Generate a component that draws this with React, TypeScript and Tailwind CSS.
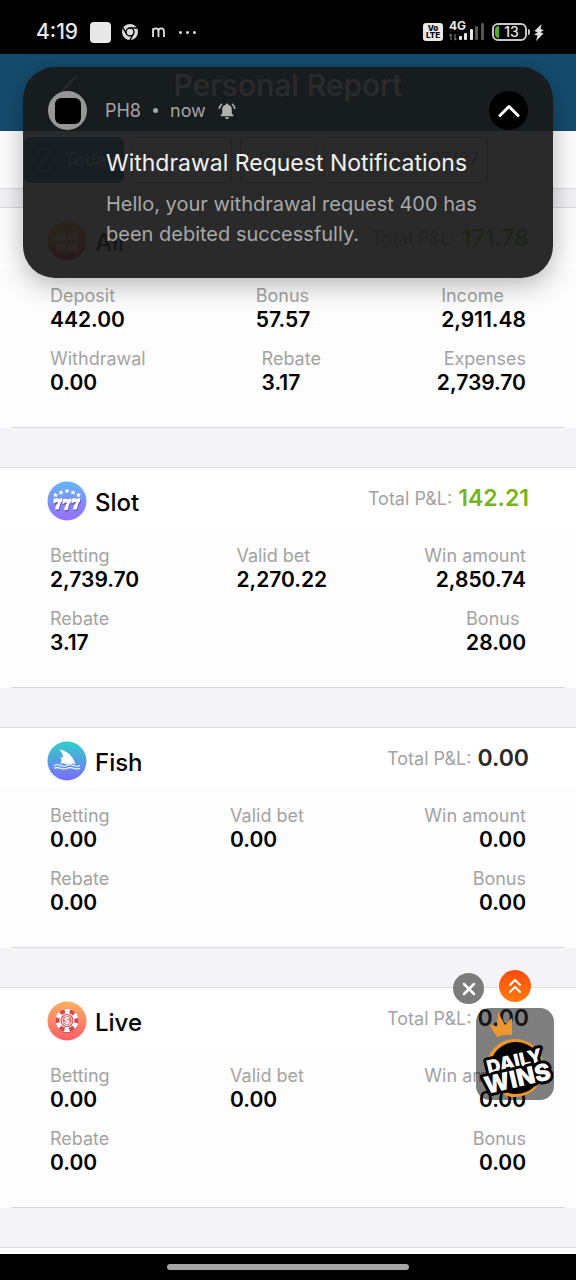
import type React from "react";
import { X, ChevronUp, ChevronsUp } from "lucide-react";

interface Stat {
  label: string;
  value: string;
  // alignment of the label and the value inside the cell
  end?: boolean;
}

interface ReportSection {
  name: string;
  total: string;
  positive?: boolean;
  icon: React.ReactNode;
  rows: Stat[][];
}

const AllIcon = () => (
  <svg viewBox="0 0 40 40" className="size-10" aria-hidden="true">
    <defs>
      <linearGradient id="all" x1="0" y1="0" x2="0" y2="1">
        <stop offset="0" stopColor="#f5b52e" />
        <stop offset="1" stopColor="#f0355c" />
      </linearGradient>
    </defs>
    <circle cx="20" cy="20" r="19.5" fill="url(#all)" />
    <g fill="#fff" opacity="0.7">
      <rect x="9" y="12" width="10" height="8" rx="3" />
      <rect x="21" y="12" width="10" height="8" rx="3" />
      <rect x="9" y="22" width="10" height="8" rx="3" />
      <rect x="21" y="22" width="10" height="8" rx="3" />
    </g>
  </svg>
);

const SlotIcon = () => (
  <svg viewBox="0 0 40 40" className="size-10" aria-hidden="true">
    <defs>
      <linearGradient id="slot" x1="0" y1="0" x2="0" y2="1">
        <stop offset="0" stopColor="#62b6f7" />
        <stop offset="1" stopColor="#9a6dfb" />
      </linearGradient>
      <path id="seven" d="M0 2.2 Q2 .6 4.400 1.600 Q6.500 2.300 8.600 .8 L8.800 3.600 Q6 7 5.200 12.500 L1.600 12.500 Q1.800 8.500 4.600 5.200 Q2.600 4.600 1.200 6.200 L0 6.200 Z" />
      <path id="star" d="M0 -2.600 L.8 -.9 L2.600 -.8 L1.200 .5 L1.700 2.300 L0 1.300 L-1.700 2.300 L-1.200 .5 L-2.600 -.8 L-.8 -.9 Z" />
    </defs>
    <circle cx="20" cy="20" r="19.5" fill="url(#slot)" />
    <g fill="#6a4fc9" transform="translate(.8 1)">
      <use href="#seven" x="6.500" y="16.500" />
      <use href="#seven" x="15.500" y="17" />
      <use href="#seven" x="24.500" y="16.500" />
    </g>
    <g fill="#fff">
      <use href="#seven" x="6.500" y="16" />
      <use href="#seven" x="15.500" y="16.500" />
      <use href="#seven" x="24.500" y="16" />
      <use href="#star" x="8.500" y="14" />
      <use href="#star" x="14" y="11.500" />
      <use href="#star" x="20" y="10" />
      <use href="#star" x="26" y="11.500" />
      <use href="#star" x="31.500" y="14" />
    </g>
  </svg>
);

const FishIcon = () => (
  <svg viewBox="0 0 40 40" className="size-10" aria-hidden="true">
    <defs>
      <linearGradient id="fish" x1="0" y1="0" x2="0" y2="1">
        <stop offset="0" stopColor="#2fd0c8" />
        <stop offset="1" stopColor="#7c6cfb" />
      </linearGradient>
    </defs>
    <circle cx="20" cy="20" r="19.5" fill="url(#fish)" />
    <path
      d="M12 8.500 C20 9.500 25 14 28.500 23 Q25.500 22.200 23.500 23 Q20.500 24.200 17.500 22.600 Q15 21.600 13 22.800 C15 20.500 15.200 18.800 13.300 17 L16 16.200 C16 13 14.500 10.500 12 8.500 Z"
      fill="#fff"
    />
    <g fill="none" stroke="#fff" strokeWidth="1.200">
      <path d="M7 24.500 q3 -1.500 6.500 0 t6.500 0 t6.500 0 t6.500 0" />
      <path d="M7 27.300 q3 -1.500 6.500 0 t6.500 0 t6.500 0 t6.500 0" />
    </g>
  </svg>
);

const LiveIcon = () => (
  <svg viewBox="0 0 40 40" className="size-10" aria-hidden="true">
    <defs>
      <linearGradient id="live" x1="0" y1="0" x2="0" y2="1">
        <stop offset="0" stopColor="#fbb062" />
        <stop offset="1" stopColor="#fb6068" />
      </linearGradient>
    </defs>
    <circle cx="20" cy="20" r="19.5" fill="url(#live)" />
    <circle cx="20" cy="20.500" r="11.500" fill="#b8323a" opacity="0.5" />
    <circle cx="20" cy="19.500" r="11.500" fill="#fff" />
    <circle cx="20" cy="19.500" r="9.500" fill="none" stroke="#d9434a" strokeWidth="4" strokeDasharray="5 4.948" strokeDashoffset="2.500" />
    <circle cx="20" cy="19.500" r="6" fill="#fff" stroke="#e0525a" strokeWidth="1.200" />
    <circle cx="20" cy="19.500" r="4.600" fill="#ef6a62" />
    <text x="20" y="22.700" textAnchor="middle" fontSize="9" fontWeight="700" fill="#fff">
      $
    </text>
  </svg>
);

const emptyRows: Stat[][] = [
  [
    { label: "Betting", value: "0.00" },
    { label: "Valid bet", value: "0.00" },
    { label: "Win amount", value: "0.00", end: true },
  ],
  [
    { label: "Rebate", value: "0.00" },
    { label: "Bonus", value: "0.00", end: true },
  ],
];

const sections: ReportSection[] = [
  {
    name: "All",
    total: "171.78",
    positive: true,
    icon: <AllIcon />,
    rows: [
      [
        { label: "Deposit", value: "442.00" },
        { label: "Bonus", value: "57.57" },
        { label: "Income", value: "2,911.48" },
      ],
      [
        { label: "Withdrawal", value: "0.00" },
        { label: "Rebate", value: "3.17" },
        { label: "Expenses", value: "2,739.70", end: true },
      ],
    ],
  },
  {
    name: "Slot",
    total: "142.21",
    positive: true,
    icon: <SlotIcon />,
    rows: [
      [
        { label: "Betting", value: "2,739.70" },
        { label: "Valid bet", value: "2,270.22" },
        { label: "Win amount", value: "2,850.74", end: true },
      ],
      [
        { label: "Rebate", value: "3.17" },
        { label: "Bonus", value: "28.00" },
      ],
    ],
  },
  { name: "Fish", total: "0.00", icon: <FishIcon />, rows: emptyRows },
  { name: "Live", total: "0.00", icon: <LiveIcon />, rows: emptyRows },
];

const StatusBar = () => (
  <div className="flex h-[54px] shrink-0 items-center justify-between bg-black pt-2.5 pr-8 pl-9 text-[#e8e8e8]">
    <div className="flex items-center">
      <span className="text-[21px] font-medium">4:19</span>
      <span className="ml-3 size-[21px] rounded bg-[#e8e8e8]" />
      <svg viewBox="0 0 16 16" className="ml-[11px] size-4" aria-hidden="true">
        <circle cx="8" cy="8" r="8" fill="#dcdcdc" />
        <circle cx="8" cy="8" r="4" fill="none" stroke="#000" strokeWidth="1.400" />
        <path d="M8 4 H15 M4.600 10 L1.200 4.200 M11.400 10 L8 16" stroke="#000" strokeWidth="1.400" />
      </svg>
      <svg viewBox="0 0 14 11" className="ml-3.5 h-2.5 w-[13px]" fill="none" stroke="#e0e0e0" strokeWidth="2" aria-hidden="true">
        <path d="M1 11 V1.500 M1 5 Q1 1.500 4 1.500 Q7 1.500 7 5 V11 M7 5 Q7 1.500 10 1.500 Q13 1.500 13 5 V11" />
      </svg>
      <span className="ml-3.5 flex gap-1">
        <i className="size-[3px] rounded-full bg-[#e0e0e0]" />
        <i className="size-[3px] rounded-full bg-[#e0e0e0]" />
        <i className="size-[3px] rounded-full bg-[#e0e0e0]" />
      </span>
    </div>

    <div className="flex items-center">
      <span className="flex h-[18px] w-5 flex-col items-center justify-center rounded-[3px] bg-[#e8e8e8] text-[8px] leading-[7px] font-extrabold text-black">
        <span>Vo</span>
        <span>LTE</span>
      </span>
      <svg viewBox="0 0 36 24" className="mb-1 ml-1.5 h-6 w-9" aria-hidden="true">
        <text x="0" y="12" fontSize="12" fontWeight="700" fill="#e8e8e8">
          4G
        </text>
        <path d="M2 22 V16 M0.500 17.500 L2 16 M6 16 V22 M6 22 L7.500 20.500" stroke="#777" strokeWidth="1.200" fill="none" />
        <g fill="#e8e8e8">
          <rect x="10" y="18" width="3" height="4" rx="1" />
          <rect x="15" y="15" width="3" height="7" rx="1" />
          <rect x="21" y="11" width="3" height="11" rx="1" />
        </g>
        <g fill="#555">
          <rect x="26" y="8" width="3" height="14" rx="1" />
          <rect x="32" y="5" width="3" height="17" rx="1" />
        </g>
      </svg>
      <span className="ml-[7px] flex h-[18px] w-[35px] items-center rounded-md border-2 border-[#c8c8c8] p-px text-sm leading-none font-medium">
        <i className="h-full w-1 rounded-l-sm bg-[#58ad28]" />
        <span className="flex-1 text-center">13</span>
      </span>
      <i className="ml-px h-1.5 w-0.5 rounded-r bg-[#c8c8c8]" />
      <svg viewBox="0 0 10 17" className="ml-1 h-[17px] w-2.5" fill="#e0e0e0" aria-hidden="true">
        <path d="M7.500 0 L0.500 7 L3.800 8.400 L0 10.500 L3.500 11.500 L2 17 L9.500 9.500 L6.500 8.200 L10 6 L6.500 5.200 Z" />
      </svg>
    </div>
  </div>
);

const PageHeader = () => (
  <>
    <header className="flex h-[77px] shrink-0 items-center bg-[#154c6e] px-8 pb-4 text-white">
      <a href="#back" aria-label="Back" className="flex w-[72px] justify-center">
        <svg viewBox="0 0 20 36" className="h-9 w-5" fill="none" stroke="currentColor" strokeWidth="2">
          <path d="M18 10 L3 25" />
        </svg>
      </a>
      <h1 className="flex-1 text-center text-3xl font-medium whitespace-nowrap">Personal Report</h1>
      <span className="w-[72px]" />
    </header>
    <nav className="flex h-[58px] shrink-0 items-start gap-2 border-b border-[#dcdcdc] bg-white px-6 pt-1.5 text-lg whitespace-nowrap text-gray-400">
      <button className="flex h-[46px] w-[100px] items-center gap-2 overflow-hidden rounded-md bg-[#0c6a9c] pl-2 text-white/60">
        <svg viewBox="0 0 24 24" className="size-6 shrink-0" fill="none" stroke="currentColor" aria-hidden="true">
          <circle cx="12" cy="12" r="11" />
          <path d="M8 16 L16 8" strokeWidth="2" />
        </svg>
        Today
      </button>
      <button className="h-[46px] w-[100px] rounded-md border border-gray-400">Yesterday</button>
      <button className="h-[46px] w-[76px] rounded-md border border-gray-400">Date</button>
      <button className="h-[46px] w-[164px] rounded-md border border-gray-400 pr-2 text-right">07/27-07/27</button>
    </nav>
  </>
);

const SectionCard = ({ section }: { section: ReportSection }) => (
  <section className="border-t border-[#dcdce0] bg-white">
    <div className="flex h-[60px] items-center justify-between px-[47px] pt-1.5">
      <div className="flex items-center gap-2">
        {section.icon}
        <h2 className="pt-1 text-2xl font-medium text-black">{section.name}</h2>
      </div>
      <p className="flex items-center gap-1.5 pb-1.5">
        <span className="text-[18px] text-[#a3a3a3]">Total P&L:</span>
        <span className={`text-[23px] font-semibold ${section.positive ? "text-[#76b41c]" : "text-[#2a2a2a]"}`}>
          {section.total}
        </span>
      </p>
    </div>
    <div className="flex flex-col gap-[15px] bg-[#fdfdfd] px-[50px] pt-4 pb-8">
      {section.rows.map((row, rowIndex) => (
        <dl key={rowIndex} className="flex justify-between">
          {row.map((stat) => (
            <div key={stat.label} className={stat.end ? "text-right" : "text-left"}>
              <dt className="text-[18px] leading-6 text-[#a3a3a3]">{stat.label}</dt>
              <dd className="text-[21px] leading-6 font-semibold text-black">{stat.value}</dd>
            </div>
          ))}
        </dl>
      ))}
    </div>
    <hr className="mx-[11px] border-[#d8d8da]" />
  </section>
);

const Notification = () => (
  <div
    role="alert"
    className="absolute inset-x-[23px] top-[67px] rounded-[32px] bg-[#181818]/92 px-[25px] pt-6 pb-7 shadow-[0_6px_28px_rgba(0,0,0,0.3)]"
  >
    <div className="flex items-center">
      <span className="flex size-[39px] items-center justify-center rounded-full bg-[#979797]">
        <span className="size-[26px] rounded-md bg-black" />
      </span>
      <div className="ml-[18px] flex flex-1 items-center gap-3 text-[18px] text-[#a5a5a5]">
        <span>PH8</span>
        <i className="size-[5px] rounded-full bg-[#a5a5a5]" />
        <span>now</span>
        <svg viewBox="0 0 18 18" className="size-[18px]" fill="#b0b0b0" aria-hidden="true">
          <path d="M9 1.500 a1.300 1.300 0 0 1 1.300 1.300 C12.800 3.400 13.800 5.300 13.800 7.500 V11.500 L15.500 13.500 V14.200 H2.500 V13.500 L4.200 11.500 V7.500 C4.200 5.300 5.200 3.400 7.700 2.800 A1.300 1.300 0 0 1 9 1.500 Z M7 15.200 H11 Q10.600 17.200 9 17.200 Q7.400 17.200 7 15.200 Z" />
          <path d="M4 1.800 Q1.600 3.500 1.200 7 M14 1.800 Q16.400 3.500 16.800 7" fill="none" stroke="#b0b0b0" strokeWidth="1.500" />
        </svg>
      </div>
      <button aria-label="Collapse" className="flex size-[39px] items-center justify-center rounded-full bg-black text-white">
        <ChevronUp className="size-9" strokeWidth={2} />
      </button>
    </div>
    <div className="pt-[15px] pl-[58px]">
      <h3 className="text-[23px] leading-9 text-[#f2f2f2]">Withdrawal Request Notifications</h3>
      <p className="max-w-96 pt-2 pb-px text-[20px] leading-[30px] text-[#a8a8a8]">
        Hello, your withdrawal request 400 has been debited successfully.
      </p>
    </div>
  </div>
);

const DailyWins = () => (
  <svg viewBox="0 0 78 92" className="h-[92px] w-[78px]" role="img" aria-label="Daily Wins">
    <path d="M21 29 L13 16 L21 19 L22 4 L29 17 L36 10 L36 27 Q28 26 21 29 Z" fill="#ef962f" />
    <circle cx="39" cy="60" r="29" fill="#ef962f" />
    <circle cx="40" cy="60" r="26" fill="#050505" />
    <g
      transform="rotate(-13 39 56)"
      fontFamily="Inter, sans-serif"
      fontWeight="900"
      fill="#fff"
      stroke="#000"
      strokeWidth="6"
      strokeLinejoin="round"
      paintOrder="stroke"
      textAnchor="middle"
    >
      <text x="39" y="60" fontSize="19">
        DAILY
      </text>
      <text x="38" y="79" fontSize="24">
        WINS
      </text>
    </g>
  </svg>
);

const FloatingTools = () => (
  <div className="absolute right-[22px] bottom-[180px] flex flex-col items-end">
    <div className="flex items-center gap-[15px] pr-[23px] pb-1">
      <button aria-label="Close" className="mt-1.5 flex size-[31px] items-center justify-center rounded-full bg-[#7c7c7c] text-white">
        <X className="size-5" strokeWidth={3} />
      </button>
      <button
        aria-label="Scroll to top"
        className="flex size-8 items-center justify-center rounded-full bg-linear-to-b from-[#ff4a0c] to-[#ff7a10] text-white"
      >
        <ChevronsUp className="size-6" strokeWidth={2} />
      </button>
    </div>
    <button className="rounded-[14px] bg-black/50">
      <DailyWins />
    </button>
  </div>
);

const App: React.FC = () => {
  return (
    <div className="relative flex h-screen flex-col overflow-hidden bg-[#f3f3f8] font-[Inter,'Noto_Sans',sans-serif]">
      <StatusBar />
      <PageHeader />
      <main className="flex flex-1 flex-col gap-[39px] overflow-hidden pt-[18px]">
        {sections.map((section) => (
          <SectionCard key={section.name} section={section} />
        ))}
        <div className="flex-1 border-t border-[#dcdce0] bg-white" />
      </main>
      <footer className="flex h-[26px] shrink-0 items-center justify-center bg-black">
        <span className="h-1.5 w-[42%] rounded-full bg-[#a5a5a5]" />
      </footer>
      <FloatingTools />
      <Notification />
    </div>
  );
};

export default App;
